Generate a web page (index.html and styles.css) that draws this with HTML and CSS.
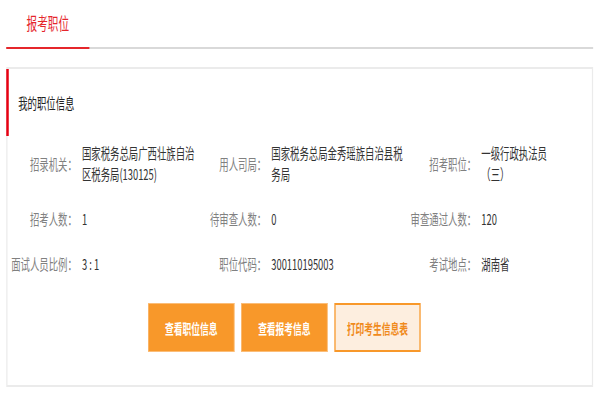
FILE: index.html
```html
<!DOCTYPE html>
<html lang="zh-CN">
<head>
<meta charset="utf-8">
<title>报考职位</title>
<link rel="stylesheet" href="styles.css">
</head>
<body>
<div class="page">
  <div class="tabs">
    <div class="tab">报考职位</div>
  </div>
  <div class="card">
    <div class="card-title">我的职位信息</div>
    <div class="info">
      <div class="label">招录机关：</div>
      <div class="value">国家税务总局广西壮族自治区税务局(130125)</div>
      <div class="label">用人司局：</div>
      <div class="value">国家税务总局金秀瑶族自治县税务局</div>
      <div class="label">招考职位：</div>
      <div class="value">一级行政执法员（三）</div>

      <div class="label">招考人数：</div>
      <div class="value">1</div>
      <div class="label">待审查人数：</div>
      <div class="value">0</div>
      <div class="label">审查通过人数：</div>
      <div class="value">120</div>

      <div class="label">面试人员比例：</div>
      <div class="value">3 : 1</div>
      <div class="label">职位代码：</div>
      <div class="value">300110195003</div>
      <div class="label">考试地点：</div>
      <div class="value">湖南省</div>
    </div>
    <div class="actions">
      <div class="btn btn-solid">查看职位信息</div>
      <div class="btn btn-solid">查看报考信息</div>
      <div class="btn btn-light">打印考生信息表</div>
    </div>
  </div>
</div>
</body>
</html>
```

FILE: styles.css
```css
html, body {
  margin: 0;
  padding: 0;
  overflow: hidden;
  background: #ffffff;
}

body {
  width: 600px;
  height: 400px;
  font-family: "Noto Sans CJK SC", "Noto Sans", sans-serif;
}

/* The screenshot is horizontally condensed: lay out at 960px and squeeze */
.page {
  width: 960px;
  box-sizing: border-box;
  padding: 0 11px 0 10px;
  transform: scale(0.625, 1);
  transform-origin: 0 0;
}

.tabs {
  display: flex;
  height: 47px;
  border-bottom: 2px solid #d9d9d9;
}

.tab {
  width: 133px;
  height: 47px;
  margin-bottom: -2px;
  border-bottom: 2px solid #e5262b;
  box-sizing: content-box;
  text-align: center;
  line-height: 45px;
  font-size: 17px;
  color: #e5262b;
}

.card {
  margin-top: 18px;
  border: 2px solid #ebebeb;
  padding-bottom: 33px;
}

.card-title {
  margin-left: -2px;
  border-left: 4px solid #e60012;
  height: 67px;
  line-height: 67px;
  padding-left: 15px;
  font-size: 15px;
  color: #222;
}

.info {
  display: grid;
  grid-template-columns: 111px 199px 104px 223px 113px 140px;
  row-gap: 24px;
  padding-top: 6px;
  font-size: 15px;
}

.label {
  align-self: center;
  text-align: right;
  color: #808080;
  line-height: 21px;
  white-space: nowrap;
}

.value {
  align-self: center;
  padding-left: 8px;
  color: #333;
  line-height: 21px;
}

.actions {
  display: flex;
  gap: 11px;
  margin-top: 29px;
  padding-left: 225px;
}

.btn {
  width: 138px;
  height: 49px;
  box-sizing: border-box;
  display: flex;
  align-items: center;
  justify-content: center;
  font-size: 14px;
  font-weight: bold;
}

.btn-solid {
  background: #f8982a;
  border: 1px solid #fbbd78;
  color: #ffffff;
}

.btn-light {
  background: #fdeedf;
  border: 2px solid #f8982a;
  color: #f08a1c;
}
```
